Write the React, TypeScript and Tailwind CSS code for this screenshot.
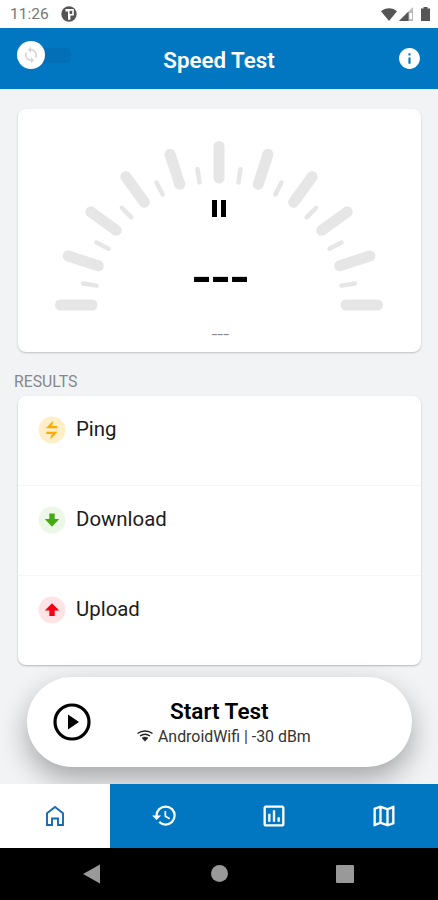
import React from 'react';
import { MdHistory, MdInfo, MdOutlineAssessment, MdOutlineMap, MdSync } from 'react-icons/md';

const polar = (angle: number, radius: number) => {
  const rad = (angle * Math.PI) / 180;
  return { x: 201 - radius * Math.cos(rad), y: 196 - radius * Math.sin(rad) };
};

const Gauge: React.FC = () => {
  const ticks = Array.from({ length: 21 }, (_, i) => ({ angle: i * 9, major: i % 2 === 0 }));
  return (
    <svg width="403" height="243" viewBox="0 0 403 243" className="block">
      {ticks.map(({ angle, major }) => {
        const from = polar(angle, major ? 127 : 124);
        const to = polar(angle, major ? 158.5 : 137.5);
        return (
          <line
            key={angle}
            x1={from.x}
            y1={from.y}
            x2={to.x}
            y2={to.y}
            stroke="#e6e6e6"
            strokeWidth={major ? 11 : 4.5}
            strokeLinecap="round"
          />
        );
      })}
    </svg>
  );
};

const StatusBar: React.FC = () => (
  <div className="flex h-[28px] items-center justify-between bg-white pl-[10px] pr-[8px]">
    <div className="flex items-center gap-[12px]">
      <span className="pt-px text-[15.500px] leading-none text-[#777]">11:26</span>
      <svg width="16" height="16" viewBox="0 0 16 16">
        <circle cx="8" cy="8" r="7.700" fill="#555" />
        <path d="M4.500 3h8.300v6.500H9.400v4.200H7V5.600H4.500z" fill="#fff" />
        <path d="M8.600 4.800h2.600v3.200H8.600z" fill="#555" />
      </svg>
    </div>
    <div className="flex items-center">
      <svg width="16" height="13" viewBox="0 0 16 13">
        <path d="M0 3.200C4.500-.7 11.500-.7 16 3.200L8 13z" fill="#555" />
      </svg>
      <svg width="14" height="14" viewBox="0 0 14 14" className="ml-[2px]">
        <path d="M14 0v14H0z" fill="#bbb" />
        <path d="M9.500 4.500V14H0z" fill="#555" />
        <path d="M10.500 6h2.500v6h-2.500z" fill="#fff" />
      </svg>
      <svg width="9" height="14" viewBox="0 0 9 14" className="ml-[8px]">
        <path d="M2.500 0h4v1.500H9V14H0V1.500h2.500z" fill="#555" />
      </svg>
    </div>
  </div>
);

const PingIcon: React.FC = () => (
  <svg width="28" height="28" viewBox="0 0 28 28">
    <circle cx="14" cy="14" r="13.500" fill="#ffefc9" />
    <path d="M19.200 12.300H7.800L14.800 5v3.200l-1.800 1.900h6.200z" fill="#ffa90a" />
    <path d="M8.300 15.700h11.400L12.700 23v-3.200l1.800-1.900H8.300z" fill="#ffa90a" />
  </svg>
);

const DownloadIcon: React.FC = () => (
  <svg width="28" height="28" viewBox="0 0 28 28">
    <circle cx="14" cy="14" r="13.500" fill="#edf7e8" />
    <path d="M11.300 7.500h5.400v5.500h4.500L14 20.800l-7.200-7.800h4.500z" fill="#43ab11" />
  </svg>
);

const UploadIcon: React.FC = () => (
  <svg width="28" height="28" viewBox="0 0 28 28">
    <circle cx="14" cy="14" r="13.500" fill="#ffe4e6" />
    <path d="M11.300 20h5.400v-5.500h4.500L14 7.200l-7.200 7.300h4.500z" fill="#fb0012" />
  </svg>
);

const results = [
  { label: 'Ping', Icon: PingIcon },
  { label: 'Download', Icon: DownloadIcon },
  { label: 'Upload', Icon: UploadIcon },
];

const App: React.FC = () => {
  return (
    <div className="flex h-[900px] w-[438px] flex-col overflow-hidden bg-[#f1f3f5] font-['Roboto',sans-serif]">
      <StatusBar />

      {/* Header */}
      <header className="grid h-[61px] grid-cols-[1fr_auto_1fr] items-center bg-[#0277c1]">
        <div className="relative mb-[7px] ml-[17px] flex h-[28px] w-[54px] items-center">
          <div className="ml-[14px] h-[15px] w-[40px] rounded-[5px] bg-[#026fb6]" />
          <div className="absolute left-0 top-0 flex h-[28px] w-[28px] items-center justify-center rounded-full bg-white">
            <MdSync size={18} className="text-[#d4d4d4]" />
          </div>
        </div>
        <h1 className="pt-[3px] text-[22.300px] font-semibold leading-none text-white">Speed Test</h1>
        <div className="mr-[16px] flex justify-end">
          <div className="flex h-[26px] w-[26px] items-center justify-center">
            <MdInfo size={25} className="shrink-0 text-white" />
          </div>
        </div>
      </header>

      {/* Gauge */}
      <section className="relative ml-[18px] mt-[20px] h-[243px] w-[403px] shrink-0 rounded-[8px] bg-white shadow-[0_1px_2px_rgba(0,0,0,0.22)]">
        <Gauge />
        <div className="absolute left-[194px] top-[91px] flex gap-[4px]">
          <span className="h-[17px] w-[5px] bg-black" />
          <span className="h-[17px] w-[5px] bg-black" />
        </div>
        <div className="absolute inset-x-0 top-[144px] scale-x-[1.18] text-center text-[46px] font-bold leading-[50px] tracking-[-2px] text-black">
          ---
        </div>
        <div className="absolute inset-x-0 top-[215px] scale-x-[1.500] pl-px text-center text-[14px] leading-[20px] text-[#888]">---</div>
      </section>

      {/* Results */}
      <h2 className="ml-[14px] mt-[20px] h-[24px] text-[15.800px] leading-[20px] text-[#85888b]">RESULTS</h2>
      <section className="ml-[18px] flex h-[269px] w-[403px] shrink-0 flex-col rounded-[8px] bg-white shadow-[0_1px_2px_rgba(0,0,0,0.25)]">
        {results.map(({ label, Icon }, i) => (
          <div key={label} className={i < 2 ? 'h-[90px] border-b border-[#f5f5f5]' : 'h-[89px]'}>
            <div className="flex items-start gap-[10px] pl-[20px] pt-[20px]">
              <Icon />
              <span className="text-[20.400px] leading-[26px] text-[#1c1c1c]">{label}</span>
            </div>
          </div>
        ))}
      </section>

      {/* Start button */}
      <button className="relative ml-[27px] mt-[12px] flex h-[90px] w-[385px] shrink-0 items-center rounded-full bg-white shadow-[0_12px_28px_rgba(0,0,0,0.32)]">
        <svg width="38" height="38" viewBox="0 0 38 38" className="ml-[26px]">
          <circle cx="19" cy="19" r="17" fill="none" stroke="#000" strokeWidth="3.200" />
          <path d="M15 11.500L26 19l-11 7.500z" fill="#000" />
        </svg>
        <div className="ml-[46px] flex flex-col pt-[3px]">
          <span className="pl-[33px] text-left text-[22.500px] font-semibold leading-[25px] text-black">Start Test</span>
          <span className="flex items-center gap-[5px] text-[15.900px] leading-[25px] text-[#333]">
            <svg width="16" height="12" viewBox="0 0 16 12" fill="none" stroke="#222" strokeWidth="1.500">
              <path d="M.5 3.500C5 0 11 0 15.500 3.500" />
              <path d="M3 6C6 3.800 10 3.800 13 6" />
              <path d="M5 8C7 6.800 9 6.800 11 8L8 11.300z" fill="#222" strokeWidth=".5" />
            </svg>
            AndroidWifi | -30 dBm
          </span>
        </div>
      </button>

      {/* Tab bar */}
      <nav className="relative mt-[17px] grid h-[63.500px] shrink-0 grid-cols-[110px_109px_110px_109px] bg-[#0277c1] text-white">
        <div className="flex items-center justify-center bg-white">
          <svg width="20" height="22" viewBox="0 0 20 22" fill="none" stroke="#1769b5" strokeWidth="1.900">
            <path d="M2 8.200L10 2l8 6.200V20h-5v-6.500H7V20H2z" />
          </svg>
        </div>
        <div className="flex items-center justify-center">
          <MdHistory size={27} />
        </div>
        <div className="flex items-center justify-center">
          <MdOutlineAssessment size={28} />
        </div>
        <div className="flex items-center justify-center">
          <MdOutlineMap size={28} />
        </div>
      </nav>

      {/* System navigation */}
      <div className="flex flex-1 items-center bg-black pl-[83px]">
        <svg width="17" height="20" viewBox="0 0 17 20">
          <path d="M17 .5v19L0 10z" fill="#999" />
        </svg>
        <div className="ml-[111px] h-[17px] w-[17px] rounded-full bg-[#999]" />
        <div className="ml-[108px] h-[18px] w-[18px] rounded-[1px] bg-[#999]" />
      </div>
    </div>
  );
};

export default App;
